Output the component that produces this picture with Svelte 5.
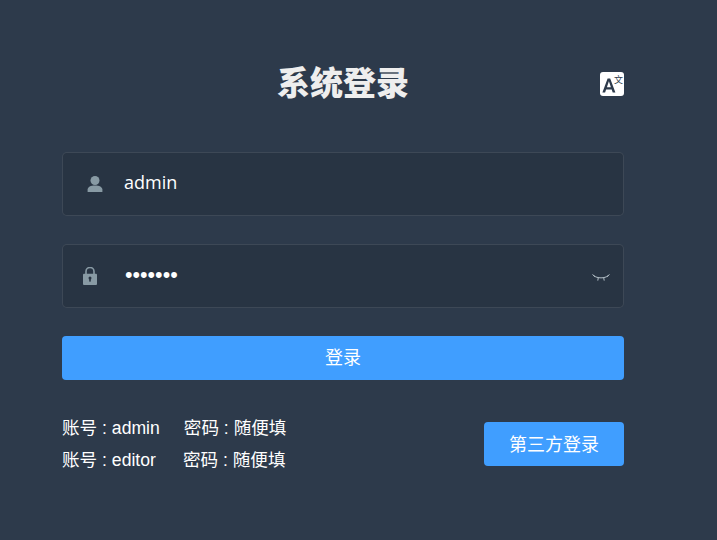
<script>
	let username = 'admin';
	let password = 'abcdefg';
</script>

<div class="login">
	<div class="title-row">
		<h3>系统登录</h3>
		<span class="lang">
			<svg viewBox="0 0 24 24" width="24" height="24"><rect width="24" height="24" rx="3" fill="#fff"/><path d="M2.4 20.4 7.6 6.4h2.6l5.2 14h-2.7l-1-3H6.1l-1 3zM6.9 15.2h4L8.9 9.3z" fill="#2d3a4b"/><text x="14" y="10.5" class="wen">文</text></svg>
		</span>
	</div>
	<div class="field">
		<svg class="icon" viewBox="0 0 16 16" width="16" height="16"><circle cx="8" cy="4.5" r="4.5" fill="#889aa4"/><path d="M.6 16v-2.4c0-2.7 3-4.2 7.4-4.2s7.4 1.5 7.4 4.2V16z" fill="#889aa4"/></svg>
		<input value={username} />
	</div>
	<div class="field">
		<svg class="icon lock" viewBox="0 0 14 18" width="14" height="18"><path d="M3 7V4.4a4 4 0 0 1 8 0V7" fill="none" stroke="#889aa4" stroke-width="1.6"/><rect y="6.8" width="14" height="11.2" rx="1" fill="#889aa4"/><circle cx="7" cy="11" r="1.5" fill="#283443"/><rect x="6.2" y="11" width="1.6" height="3.6" fill="#283443"/></svg>
		<input type="password" value={password} />
		<svg class="eye" viewBox="0 0 18 8" width="18" height="8"><path d="M1.5 1.6c4 3 11 3 15 0M.5 .5 3 2.6M6.3 3.6 5.8 6.6M11.7 3.6l.5 3M17.5 .5 15 2.6" fill="none" stroke="#b4c0c8" stroke-width="1"/></svg>
	</div>
	<button class="submit"><span>登录</span></button>
	<div class="bottom">
		<div class="tips">
			<div class="tip"><span class="acc">账号 : admin</span><span>密码 : 随便填</span></div>
			<div class="tip"><span class="acc">账号 : editor</span><span>密码 : 随便填</span></div>
		</div>
		<button class="third"><span>第三方登录</span></button>
	</div>
</div>

<style>
	:global(body) {
		background: #2d3a4b;
		font-family: "Liberation Sans", "Noto Sans CJK SC", sans-serif;
	}
	.login {
		box-sizing: border-box;
		width: 717px;
		height: 540px;
		padding: 60px 93px 0 62px;
		background: #2d3a4b;
	}
	.title-row {
		position: relative;
		height: 48px;
		margin-bottom: 44px;
	}
	h3 {
		margin: 0;
		text-align: center;
		font-size: 33px;
		line-height: 48px;
		font-weight: 900;
		color: #eee;
	}
	.lang {
		position: absolute;
		right: 0;
		top: 12px;
		width: 24px;
		height: 24px;
	}
	.wen {
		font: 9px "Noto Sans CJK SC", sans-serif;
		fill: #2d3a4b;
	}
	.field {
		display: flex;
		align-items: center;
		box-sizing: border-box;
		height: 64px;
		margin-bottom: 28px;
		padding-left: 24px;
		background: #283443;
		border: 1px solid rgba(255, 255, 255, 0.1);
		border-radius: 5px;
	}
	.icon {
		flex: none;
		margin-left: -0.5px;
		margin-right: 0.5px;
	}
	.lock {
		margin-left: -4px;
		margin-right: 6px;
	}
	input {
		flex: 1;
		min-width: 0;
		height: 47px;
		margin-left: 21px;
		padding: 0 0 5px;
		background: transparent;
		border: 0;
		outline: 0;
		color: #fff;
		font-family: "Open Sans", sans-serif;
		font-size: 18px;
	}
	input[type="password"] {
		padding: 0 0 2px 1px;
		font-family: "Liberation Sans", sans-serif;
		font-size: 21.5px;
	}
	.eye {
		flex: none;
		margin: 4px 13px 0 0;
	}
	button {
		border: 0;
		padding: 0;
		background: #409eff;
		color: #fff;
		border-radius: 4px;
		font-family: inherit;
	}
	button span {
		position: relative;
		top: -1px;
	}
	.submit {
		display: block;
		width: 100%;
		height: 44px;
		font-size: 18px;
	}
	.submit span {
		top: -2px;
	}
	.bottom {
		display: flex;
		justify-content: space-between;
		align-items: flex-start;
		margin-top: 32px;
	}
	.tips {
		color: #fff;
		font-size: 17.6px;
	}
	.tip {
		display: flex;
		line-height: 32px;
	}
	.acc {
		margin-right: 24px;
	}
	.tip + .tip .acc {
		margin-right: 27px;
	}
	.third {
		width: 140px;
		height: 44px;
		margin-top: 10px;
		font-size: 18px;
	}
</style>
